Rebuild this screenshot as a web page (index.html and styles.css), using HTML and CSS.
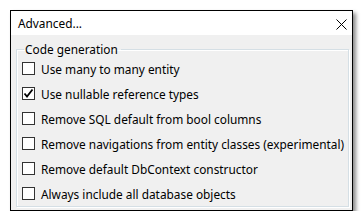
FILE: index.html
```html
<!DOCTYPE html>
<html lang="en">
<head>
    <meta charset="UTF-8">
    <title>Advanced...</title>
    <link rel="stylesheet" href="styles.css">
</head>
<body>
    <div class="window">
        <div class="title-bar">
            <span class="title">Advanced...</span>
            <span class="close">
                <svg width="11" height="11" viewBox="0 0 11 11"><path d="M0.5 0.5 L10.5 10.5 M10.5 0.5 L0.5 10.5" stroke="#000" stroke-width="1" fill="none"/></svg>
            </span>
        </div>
        <div class="content">
            <fieldset class="group">
                <legend>Code generation</legend>
                <label class="option"><span class="box"></span>Use many to many entity</label>
                <label class="option"><span class="box checked">
                    <svg width="11" height="11" viewBox="0 0 11 11"><path d="M1.5 5.5 L4 8.5 L9.5 1.5" stroke="#000" stroke-width="1.8" fill="none"/></svg>
                </span>Use nullable reference types</label>
                <label class="option"><span class="box"></span>Remove SQL default from bool columns</label>
                <label class="option"><span class="box"></span>Remove navigations from entity classes (experimental)</label>
                <label class="option"><span class="box"></span>Remove default DbContext constructor</label>
                <label class="option"><span class="box"></span>Always include all database objects</label>
            </fieldset>
        </div>
    </div>
</body>
</html>
```

FILE: styles.css
```css
body {
    margin: 0;
    background-color: #fff;
    font-family: 'Noto Sans', 'Open Sans', sans-serif;
    font-size: 11.85px;
    color: #000;
}
.window {
    margin: 10px 0 0 10px;
    width: 341px;
    height: 199px;
    border: 1px solid #000;
    background-color: #f0f0f0;
    box-shadow: 3px 3px 4px rgba(0, 0, 0, 0.45);
    display: flex;
    flex-direction: column;
}
.title-bar {
    height: 25px;
    background-color: #fff;
    display: flex;
    align-items: center;
    justify-content: space-between;
    padding: 0 5px 0 7px;
}
.close {
    display: flex;
    padding-top: 2px;
}
.content {
    flex: 1;
    padding: 7px 3px 3px 5px;
    display: flex;
}
.group {
    flex: 1;
    margin: 0;
    padding: 0 0 0 5px;
    border: 1px solid #d5dfe5;
    box-shadow: inset 1px 1px 0 #fff, 1px 1px 0 #fff;
    display: flex;
    flex-direction: column;
}
.group legend {
    padding: 0 3px 0 1px;
    margin-left: 2px;
    line-height: 14px;
}
.option {
    height: 25px;
    display: flex;
    align-items: center;
    white-space: nowrap;
}
.box {
    flex: none;
    width: 11px;
    height: 11px;
    border: 1px solid #333;
    background-color: #fff;
    margin-right: 6px;
    display: flex;
}
```
